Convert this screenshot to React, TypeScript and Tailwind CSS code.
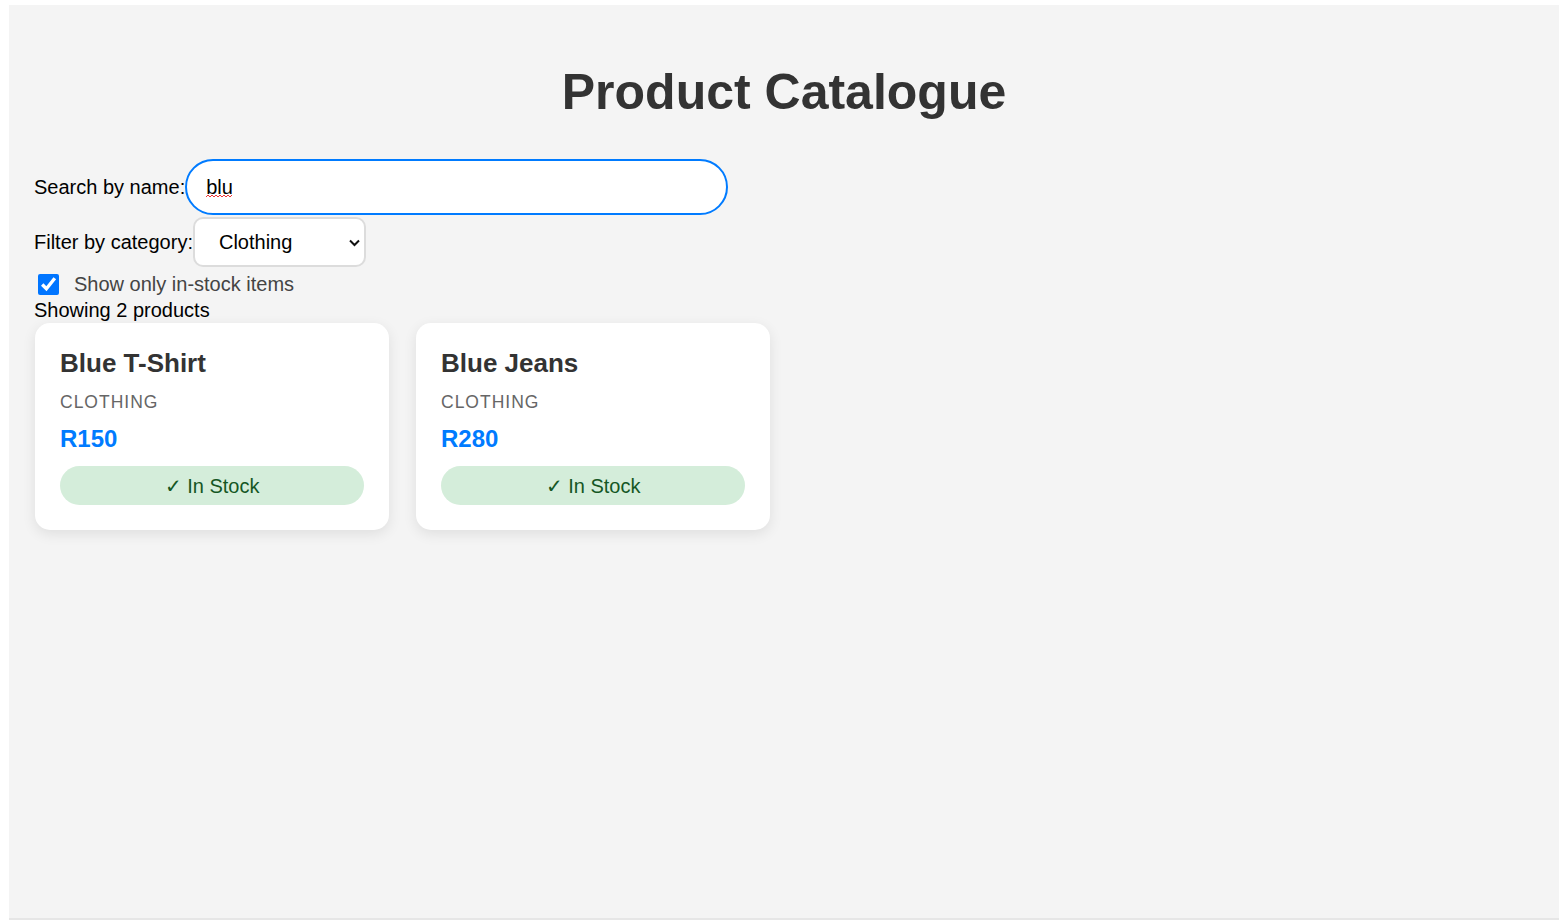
import React, { useState } from 'react';

type Product = {
  id: number;
  name: string;
  category: string;
  price: number;
  inStock: boolean;
};

const products: Product[] = [
  { id: 1, name: 'Blue T-Shirt', category: 'Clothing', price: 150, inStock: true },
  { id: 2, name: 'Red Hoodie', category: 'Clothing', price: 320, inStock: true },
  { id: 3, name: 'Blue Jeans', category: 'Clothing', price: 280, inStock: true },
  { id: 4, name: 'Blue Cap', category: 'Clothing', price: 90, inStock: false },
  { id: 5, name: 'Bluetooth Speaker', category: 'Electronics', price: 650, inStock: true },
  { id: 6, name: 'Coffee Mug', category: 'Home', price: 60, inStock: true },
];

const ProductCard: React.FC<{ product: Product }> = ({ product }) => (
  <div className="w-[354px] rounded-[15px] bg-white p-[25px] shadow-[0_4px_14px_rgba(0,0,0,0.09)]">
    <h3 className="text-[26px] font-bold leading-[30px] text-[#333]">{product.name}</h3>
    <p className="mt-[14px] text-[17.5px] uppercase leading-[20px] tracking-[1px] text-[#666]">
      {product.category}
    </p>
    <p className="mt-[13px] text-[24px] font-bold leading-[28px] text-[#007bff]">R{product.price}</p>
    {product.inStock ? (
      <div className="mt-[13px] flex h-[39px] items-center justify-center rounded-full bg-[#d4edda] pt-[2px] text-[20px] leading-[23px] text-[#155724]">
        ✓ In Stock
      </div>
    ) : (
      <div className="mt-[13px] flex h-[39px] items-center justify-center rounded-full bg-[#f8d7da] pt-[2px] text-[20px] leading-[23px] text-[#721c24]">
        ✗ Out of Stock
      </div>
    )}
  </div>
);

export default function App() {
  const [search, setSearch] = useState('blu');
  const [category, setCategory] = useState('Clothing');
  const [inStockOnly, setInStockOnly] = useState(true);

  const visible = products.filter(
    (p) =>
      p.name.toLowerCase().includes(search.toLowerCase()) &&
      (category === 'All' || p.category === category) &&
      (!inStockOnly || p.inStock)
  );

  return (
    <div
      className="h-[921px] bg-white pl-[9px] pt-[5px]"
      style={{ fontFamily: '"Liberation Sans", Arial, sans-serif' }}
    >
      <div className="h-[915px] w-[1550px] border-b-2 border-[#e6e6e6] bg-[#f4f4f4] px-[25px] pt-[25px]">
        <h1 className="mt-[34px] text-center text-[50px] font-bold leading-[57px] text-[#333]">
          Product Catalogue
        </h1>

        <div className="mt-[38px] flex items-center">
          <label htmlFor="search" className="text-[20px] leading-[23px] text-black">
            Search by name:
          </label>
          <div className="relative">
            <input
              id="search"
              autoFocus
              spellCheck={false}
              value={search}
              onChange={(e) => setSearch(e.target.value)}
              className="h-[56px] w-[543px] rounded-full border-2 border-[#007bff] bg-white pl-[19px] text-[20px] text-black outline-none"
            />
            <svg
              className="pointer-events-none absolute left-[21px] top-[35px]"
              width="27"
              height="4"
              viewBox="0 0 27 4"
            >
              <path
                d="M0 3 L2 1 L4 3 L6 1 L8 3 L10 1 L12 3 L14 1 L16 3 L18 1 L20 3 L22 1 L24 3 L26 1"
                fill="none"
                stroke="#e33"
                strokeWidth="1"
              />
            </svg>
          </div>
        </div>

        <div className="mt-[2px] flex items-center">
          <label htmlFor="category" className="text-[20px] leading-[23px] text-black">
            Filter by category:
          </label>
          <div className="relative">
            <select
              id="category"
              value={category}
              onChange={(e) => setCategory(e.target.value)}
              className="h-[50px] w-[173px] appearance-none rounded-[10px] border-2 border-[#dcdcdc] bg-white pl-[24px] text-[20px] text-black outline-none"
            >
              <option value="All">All</option>
              <option value="Clothing">Clothing</option>
              <option value="Electronics">Electronics</option>
              <option value="Home">Home</option>
            </select>
            <svg
              className="pointer-events-none absolute right-[6px] top-[22px]"
              width="11"
              height="8"
              viewBox="0 0 11 8"
            >
              <path d="M1 1.5 L5.5 6 L10 1.5" fill="none" stroke="#111" strokeWidth="2" />
            </svg>
          </div>
        </div>

        <label className="mt-[6px] flex items-center">
          <input
            type="checkbox"
            checked={inStockOnly}
            onChange={(e) => setInStockOnly(e.target.checked)}
            className="ml-[4px] h-[21px] w-[21px] accent-[#0075ff]"
          />
          <span className="ml-[15px] text-[20px] leading-[23px] text-[#444]">Show only in-stock items</span>
        </label>

        <p className="mt-[3px] text-[20px] leading-[23px] text-black">
          Showing {visible.length} products
        </p>

        <div className="mt-[1px] ml-[1px] flex gap-[27px]">
          {visible.map((p) => (
            <ProductCard key={p.id} product={p} />
          ))}
        </div>
      </div>
    </div>
  );
}
